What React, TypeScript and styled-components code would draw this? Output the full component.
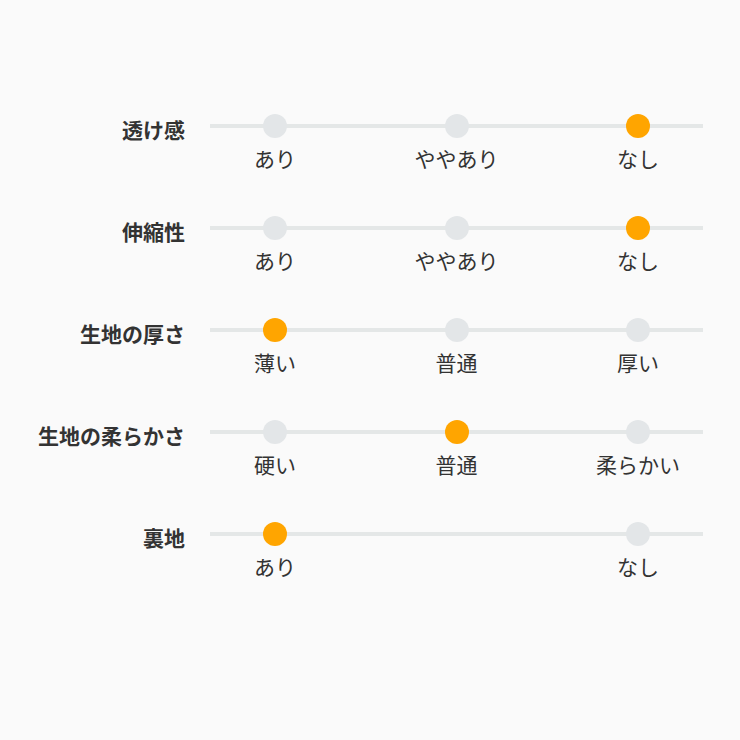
import React from "react"
import styled, { createGlobalStyle } from "styled-components"

type Item = {
  title: string
  options: string[]
  positions: number[]
  selected: number
}

const items: Item[] = [
  { title: "透け感", options: ["あり", "ややあり", "なし"], positions: [0, 1, 2], selected: 2 },
  { title: "伸縮性", options: ["あり", "ややあり", "なし"], positions: [0, 1, 2], selected: 2 },
  { title: "生地の厚さ", options: ["薄い", "普通", "厚い"], positions: [0, 1, 2], selected: 0 },
  { title: "生地の柔らかさ", options: ["硬い", "普通", "柔らかい"], positions: [0, 1, 2], selected: 1 },
  { title: "裏地", options: ["あり", "なし"], positions: [0, 2], selected: 0 },
]

export default function App() {
  return (
    <>
      <GlobalStyle />
      <Page>
        {items.map((item) => (
          <Row key={item.title}>
            <Title>{item.title}</Title>
            <Scale>
              <Track />
              {[0, 1, 2].map((slot) => {
                const idx = item.positions.indexOf(slot)
                return (
                  <Column key={slot}>
                    {idx >= 0 && (
                      <>
                        <Dot active={idx === item.selected} />
                        <Label>{item.options[idx]}</Label>
                      </>
                    )}
                  </Column>
                )
              })}
            </Scale>
          </Row>
        ))}
      </Page>
    </>
  )
}

const GlobalStyle = createGlobalStyle`
  html, body {
    margin: 0;
    padding: 0;
    background: #fafafa;
  }
  body {
    font-family: "Noto Sans CJK JP", "Noto Sans", sans-serif;
    color: #333;
  }
`

const Page = styled.div`
  width: 740px;
  height: 740px;
  box-sizing: border-box;
  padding-top: 114px;
  display: flex;
  flex-direction: column;
  gap: 44px;
`

const Row = styled.div`
  display: grid;
  grid-template-columns: 185px 493px;
  column-gap: 25px;
  align-items: start;
`

const Title = styled.div`
  text-align: right;
  font-size: 21px;
  font-weight: 700;
  line-height: 28px;
  padding-top: 1px;
  color: #333;
  white-space: nowrap;
`

const Scale = styled.div`
  position: relative;
  display: flex;
  justify-content: space-between;
`

const Track = styled.div`
  position: absolute;
  left: 0;
  right: 0;
  top: 10px;
  height: 4px;
  background: #e4e7e7;
`

const Column = styled.div`
  position: relative;
  width: 130px;
  display: flex;
  flex-direction: column;
  align-items: center;
  gap: 6px;
`

const Dot = styled.div<{ active: boolean }>`
  width: 24px;
  height: 24px;
  border-radius: 50%;
  background: ${(p) => (p.active ? "#ffa500" : "#e3e6e8")};
`

const Label = styled.div`
  font-size: 21px;
  line-height: 28px;
  color: #333;
  white-space: nowrap;
`
